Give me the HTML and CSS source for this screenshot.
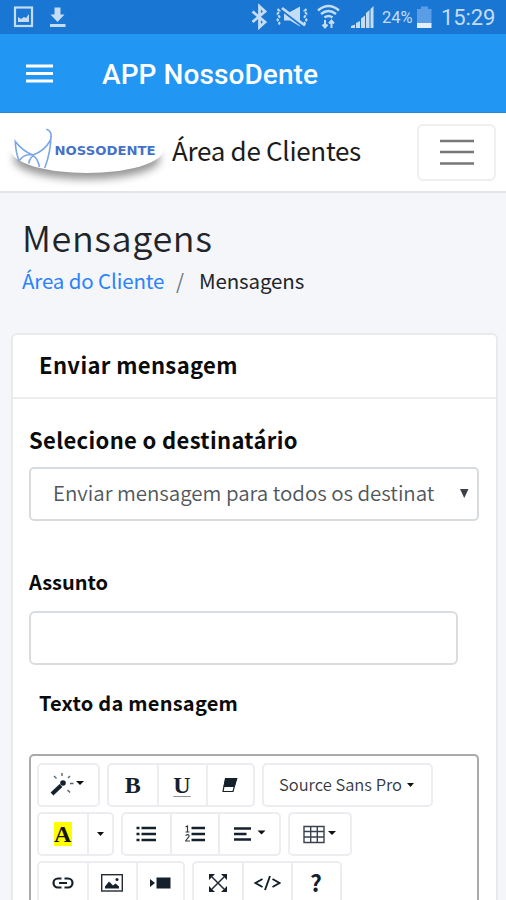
FILE: index.html
```html
<!DOCTYPE html>
<html lang="pt">
<head>
<meta charset="utf-8">
<title>APP NossoDente</title>
<link rel="stylesheet" href="styles.css">
</head>
<body>
<div class="status">
  <svg class="status-left" width="70" height="34" viewBox="0 0 70 34">
    <rect x="15" y="7.500" width="17" height="18.500" fill="none" stroke="#c5dcf5" stroke-width="2.200"/>
    <path d="M18 22v-5l3 2 3-2 2 1 3-4v8z" fill="#c5dcf5"/>
    <path d="M54.500 7.500h6v7h4L57.500 22l-7-7.500h4zM50 24h15.500v3H50z" fill="#c5dcf5"/>
  </svg>
  <svg class="status-icons" width="126" height="34" viewBox="250 0 126 34">
    <path d="M252.500 11.500l12.500 10.500-5.500 5V6.500l5.500 5-12.500 10.500" fill="none" stroke="#c5dcf5" stroke-width="2.800"/>
    <path d="M277.500 9l2 2-2 3 2 3-2 3 2 3-1 2M306.500 9l-2 2 2 3-2 3 2 3-2 3 1 2" fill="none" stroke="#c5dcf5" stroke-width="2" stroke-dasharray="3 1"/>
    <path d="M284 12h6l10-5.500v20l-10-6h-6z" fill="#c5dcf5"/>
    <path d="M282 10.500l22 17" stroke="#1976d2" stroke-width="2"/>
    <path d="M282 8l23 17.500" stroke="#c5dcf5" stroke-width="2.600"/>
    <path d="M318 10.500q10.500-9 21 0M321 14q7.500-6 15 0M324.500 17.500q4-3 8 0" fill="none" stroke="#c5dcf5" stroke-width="2.500"/>
    <path d="M325 20v7M322.500 24.500l2.500 3 2.500-3M331.500 28v-7M329 23.500l2.500-3 2.500 3" fill="none" stroke="#c5dcf5" stroke-width="2"/>
    <path d="M351 28v-2l4-1.500v3.500zM356 28v-5l4-2v7zM361 28V18.500l4-3V28zM366 28V13l3.500-3v18zM370.500 28V9l3-3v22z" fill="#c5dcf5"/>
  </svg>
  <span class="percent">24%</span>
  <svg class="battery" width="15" height="34" viewBox="0 0 15 34">
    <path d="M0 9h4V6.500h7V9h3.500v14H0z" fill="#5b9de4"/>
    <path d="M0 23h14.500v5H0z" fill="#e4effb"/>
  </svg>
  <span class="clock">15:29</span>
</div>
<header class="appbar">
  <svg width="27" height="20" viewBox="0 0 27 20"><path d="M0 3h27M0 10.500h27M0 18h27" stroke="#fff" stroke-width="3"/></svg>
  <h1>APP NossoDente</h1>
</header>
<nav class="navbar">
  <div class="logo">
    <svg width="152" height="46" viewBox="11 127 152 46">
      <path d="M46.300 129.300C51 130.500 52.500 135 50 141C46.500 147 40 152.500 33 155C26 152.500 20 147.500 15.300 141.500C15.500 148 16.500 155 19.500 161.500M51 135C51 148 48.500 158 44.700 168M20 160C23 155 27 154 33 155M28.700 163.500C30 158 32 155.500 34.500 156.500C37 159 38.500 162 39.500 167" fill="none" stroke="#7aa7e6" stroke-width="1.600"/>
      <text class="logo-text" x="54.500" y="155" textLength="101" lengthAdjust="spacingAndGlyphs">NOSSODENTE</text>
    </svg>
  </div>
  <span class="brand">Área de Clientes</span>
  <button class="toggler"><svg width="34" height="28" viewBox="0 0 34 28"><path d="M0 3h34M0 14h34M0 25.500h34" stroke="#777" stroke-width="2.500"/></svg></button>
</nav>
<main>
  <h2 class="title">Mensagens</h2>
  <div class="crumbs"><a>Área do Cliente</a><span class="slash">/</span><span class="here">Mensagens</span></div>
  <section class="card">
    <h3 class="card-head">Enviar mensagem</h3>
    <div class="card-body">
      <label class="label-lg">Selecione o destinatário</label>
      <div class="select"><span class="select-value">Enviar mensagem para todos os destinat</span><svg width="9" height="9" viewBox="0 0 9 9"><path d="M0 0h8.500L4.250 9z" fill="#3c4147"/></svg></div>
      <label class="label-subject">Assunto</label>
      <div class="input"></div>
      <label class="label-text">Texto da mensagem</label>
      <div class="editor">
        <div class="row">
          <div class="group"><span class="btn w62">
            <svg width="44" height="30" viewBox="0 0 44 30"><path d="M5 24l9-8.500" stroke="#14202c" stroke-width="4"/><circle cx="16" cy="13" r="2.800" fill="#14202c"/><path d="M15 3v3M7 6l2.500 2.500M23 6l-2 2M23 13.500h3.500M20.500 20l2.500 2.500" stroke="#596270" stroke-width="1.400"/><path d="M29 11h8l-4 4z" fill="#111"/></svg></span></div>
          <div class="group"><span class="btn w48 serif">B</span><span class="btn w49 serif under"><u>U</u></span><span class="btn w48">
            <svg width="18" height="18" viewBox="0 0 18 18"><path d="M4.500 2.500h11l-3.500 13H2z" fill="#fff" stroke="#14202c" stroke-width="1.200"/><path d="M4.500 2h12l-3 9H2.500z" fill="#14202c"/></svg></span></div>
          <div class="group"><span class="btn w170"><span class="font-name">Source Sans Pro</span><svg width="7" height="4" viewBox="0 0 7 4"><path d="M0 0h7L3.500 4z" fill="#111"/></svg></span></div>
        </div>
        <div class="row">
          <div class="group"><span class="btn w48 serif"><mark>A</mark></span><span class="btn w26"><svg width="7" height="4" viewBox="0 0 7 4"><path d="M0 0h7L3.500 4z" fill="#111"/></svg></span></div>
          <div class="group"><span class="btn w48">
            <svg width="20" height="18" viewBox="0 0 20 18"><path d="M5.500 3H20M5.500 9H20M5.500 15H20" stroke="#14202c" stroke-width="2.400"/><path d="M.500 3h3M.500 9h3M.500 15h3" stroke="#14202c" stroke-width="2.600"/></svg></span><span class="btn w48">
            <svg width="20" height="18" viewBox="0 0 20 18"><path d="M6.500 3H20M6.500 9H20M6.500 15H20" stroke="#14202c" stroke-width="2.400"/><path d="M.500 2l2-1v6M.500 7h4M.500 10.500q4-2 3.500 1L.500 16H5" fill="none" stroke="#333b45" stroke-width="1.200"/></svg></span><span class="btn w61">
            <svg width="34" height="18" viewBox="0 0 34 18"><path d="M2 3.500h17M2 9h12.500M2 14.500h17" stroke="#14202c" stroke-width="2.400"/><path d="M25.500 5.500h8l-4 4z" fill="#111"/></svg></span></div>
          <div class="group"><span class="btn w60">
            <svg width="34" height="19" viewBox="0 0 34 19"><path d="M1 1.500h20v16H1zM1 6.500h20M1 12h20M7.700 1.500v16M14.300 1.500v16" fill="none" stroke="#3a424d" stroke-width="1.400"/><path d="M25 6h8l-4 4z" fill="#111"/></svg></span></div>
        </div>
        <div class="row">
          <div class="group"><span class="btn w48">
            <svg width="22" height="12" viewBox="0 0 22 12"><path d="M9.500 1.500H6a4.500 4.500 0 0 0 0 9h3.500M12.500 1.500H16a4.500 4.500 0 0 1 0 9h-3.500M7 6h8" fill="none" stroke="#14202c" stroke-width="2.200"/></svg></span><span class="btn w49">
            <svg width="22" height="18" viewBox="0 0 22 18"><rect x=".7" y=".7" width="20.600" height="16.300" fill="none" stroke="#222b36" stroke-width="1.400"/><path d="M4 14.500v-2l4-5 4 4 2.500-2 3.500 3v2z" fill="#14202c"/><circle cx="16" cy="5.500" r="1.500" fill="#14202c"/></svg></span><span class="btn w48">
            <svg width="21" height="12" viewBox="0 0 21 12"><path d="M6.500 .500H20.500v11H6.500zM0 2l5 4-5 4z" fill="#14202c"/></svg></span></div>
          <div class="group"><span class="btn w48">
            <svg width="18" height="18" viewBox="0 0 18 18"><path d="M3 3l12 12M15 3L3 15" stroke="#222b36" stroke-width="1.500"/><path d="M0 0h6L0 6zM12 0h6v6zM18 12v6h-6zM6 18H0v-6z" fill="#14202c"/></svg></span><span class="btn w49">
            <svg width="27" height="16" viewBox="0 0 27 16"><path d="M8.500 4L1.500 8l7 4M18.500 4l7 4-7 4M16 1l-5 14" fill="none" stroke="#14202c" stroke-width="1.900"/></svg></span><span class="btn w49 help">?</span></div>
        </div>
      </div>
    </div>
  </section>
</main>
</body>
</html>
```
FILE: styles.css
```css
* { box-sizing: border-box; }
body {
  margin: 0;
  width: 506px;
  height: 900px;
  overflow: hidden;
  background: #f4f6fa;
  font-family: "Noto Sans CJK SC", "Noto Sans", sans-serif;
  color: #212529;
  display: flex;
  flex-direction: column;
}
svg { display: block; flex: none; }
h1, h2, h3 { margin: 0; font-weight: 400; }
label { display: block; white-space: nowrap; }
.status {
  flex: none;
  height: 34px;
  display: flex;
  align-items: center;
  background: #1976d2;
  color: #c5dcf5;
  font-family: Roboto, sans-serif;
  white-space: nowrap;
}
.status-icons { margin-left: 180px; }
.percent { width: 41px; padding: 2px 0 0 6px; font-size: 16.5px; line-height: 34px; }
.clock { margin-left: 9px; font-size: 22px; line-height: 34px; padding-top: 2px; letter-spacing: -0.1px; }
.appbar {
  flex: none;
  height: 79px;
  padding-left: 26px;
  display: flex;
  align-items: center;
  gap: 49px;
  background: #2196f3;
  border-bottom: 1px solid #2487dc;
}
.appbar h1 {
  color: #fff;
  font: 500 28px/40px Roboto, sans-serif;
  padding-top: 3px;
  letter-spacing: 0.08px;
  white-space: nowrap;
}
.navbar {
  flex: none;
  height: 80px;
  padding: 0 10px 0 11px;
  display: flex;
  align-items: center;
  background: #fff;
  border-bottom: 2px solid #e2e4e8;
}
.logo {
  width: 152px;
  height: 46px;
  margin-top: -4px;
  border-radius: 50%;
  box-shadow: 0 9px 9px -3px rgba(0, 0, 0, .42);
}
.logo-text { font: bold 12px "DejaVu Sans", sans-serif; fill: #4671c6; }
.brand { margin: -5px 0 0 9px; font-size: 26px; line-height: 40px; letter-spacing: -0.3px; color: #1c1c1c; white-space: nowrap; }
.toggler {
  width: 79px;
  height: 57px;
  margin-left: auto;
  display: flex;
  align-items: center;
  justify-content: center;
  background: #fff;
  border: 2px solid #f0eeef;
  border-radius: 6px;
}
main { flex: 1; min-height: 0; padding: 21px 8px 0 11px; display: flex; flex-direction: column; }
.title { flex: none; padding-left: 11px; font-size: 36px; font-weight: 350; line-height: 44px; letter-spacing: 0.6px; }
.crumbs { flex: none; display: flex; padding: 2px 0 0 11px; height: 75px; font-size: 20.5px; line-height: 40px; letter-spacing: -0.13px; white-space: nowrap; }
.crumbs a { width: 154px; color: #2b83fb; }
.slash { width: 23px; color: #6c757d; }
.card {
  flex: 1;
  min-height: 0;
  display: flex;
  flex-direction: column;
  border: 2px solid #e9eaeb;
  border-bottom: 0;
  border-radius: 6px 6px 0 0;
  background: #fff;
}
.card-head {
  flex: none;
  height: 64px;
  padding-left: 26px;
  font-size: 22px;
  font-weight: 700;
  line-height: 58px;
  letter-spacing: 0.37px;
  color: #0b0b0b;
  border-bottom: 2px solid #ececed;
}
.card-body { flex: 1; min-height: 0; display: flex; flex-direction: column; padding: 20px 17px 0 16px; color: #0b0b0b; font-weight: 700; }
.card-body > * { flex: none; }
.label-lg { font-size: 22px; line-height: 40px; height: 48px; letter-spacing: 0.34px; }
.select {
  height: 54px;
  padding: 0 9px 0 22px;
  display: flex;
  align-items: center;
  justify-content: space-between;
  border: 2px solid #d8dbdd;
  border-radius: 5px;
  color: #50565c;
  font-size: 20.5px;
  font-weight: 350;
  line-height: 46px;
  white-space: nowrap;
}
.select-value { margin-top: -4px; letter-spacing: -0.03px; }
.select svg { margin: -2px -1px 0 0; }
.label-subject { margin-top: 41px; height: 49px; font-size: 20px; line-height: 40px; }
.input { width: 429px; height: 54px; border: 2px solid #dadddf; border-radius: 6px; }
.label-text { padding: 18px 0 0 10px; height: 89px; font-size: 20px; line-height: 40px; letter-spacing: 0.24px; }
.card-body > .editor {
  flex: 1;
  min-height: 0;
  overflow: hidden;
  padding: 7px 0 0 6px;
  border: 2px solid #a9a9a9;
  border-bottom: 0;
  border-radius: 5px 5px 0 0;
}
.row { display: flex; gap: 7px; height: 44px; margin-bottom: 5px; }
.group { display: flex; border: 2px solid #ebedf0; border-radius: 5px; }
.btn { display: flex; align-items: center; justify-content: center; color: #14202c; }
.btn + .btn { border-left: 2px solid #ebedf0; }
.w26 { width: 25px; }
.w48 { width: 47.5px; }
.w49 { width: 49px; }
.w60 { width: 60px; }
.w61 { width: 61px; }
.w62 { width: 59px; }
.w170 { width: 167px; gap: 5px; padding-right: 2px; }
.serif { font: bold 24px/24px "Liberation Serif", serif; }
.under u { text-decoration-color: #8d939b; text-decoration-thickness: 1px; text-underline-offset: 3px; }
mark { width: 18px; height: 24px; display: flex; justify-content: center; background: #ff0; color: #14140a; }
.font-name { margin-top: -2px; font-size: 16.5px; font-weight: 350; line-height: 38px; color: #343a42; white-space: nowrap; }
.help { font: bold 23px/36px "Noto Sans CJK SC", sans-serif; padding-bottom: 3px; }
```
